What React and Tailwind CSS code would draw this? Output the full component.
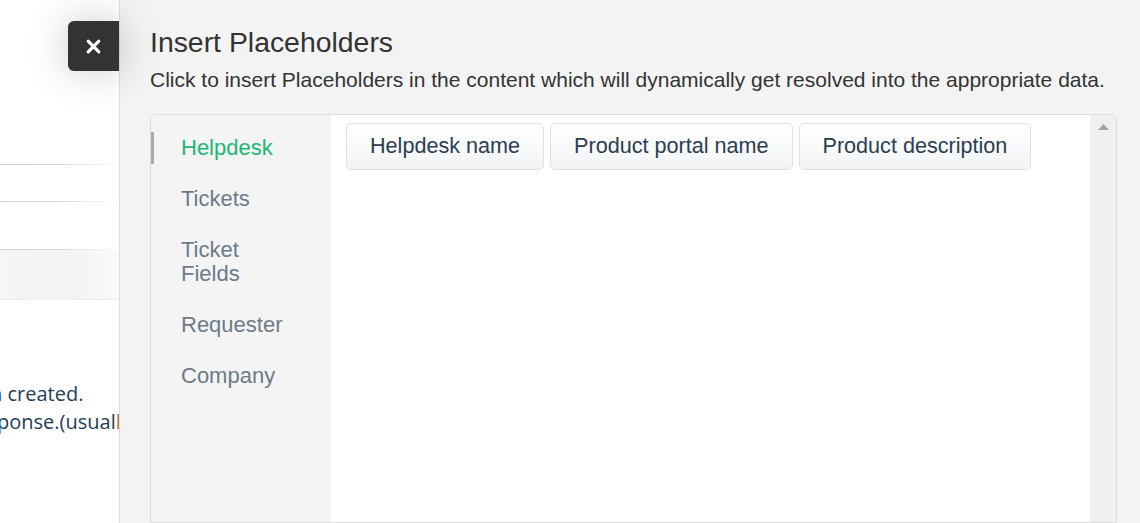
import React from "react";

const navItems = [
  { label: "Helpdesk", active: true },
  { label: "Tickets" },
  { label: "Ticket\nFields" },
  { label: "Requester" },
  { label: "Company" },
];

const placeholders = ["Helpdesk name", "Product portal name", "Product description"];

function Line({ className }) {
  return <div className={`h-px bg-gradient-to-r from-[#cfd3d6] via-[#d6d9db] to-white ${className}`} />;
}

export default function App() {
  return (
    <div className="relative flex w-[1140px] h-[523px] overflow-hidden bg-white font-['Liberation_Sans',Arial,sans-serif]">
      {/* page behind the drawer */}
      <div className="w-[119px] shrink-0 bg-white relative overflow-hidden">
        <Line className="mt-[164px]" />
        <Line className="mt-[36px]" />
        <Line className="mt-[47px]" />
        <div className="h-[50px] bg-gradient-to-r from-[#f6f6f6] via-[#f2f2f2] to-[#fafafa] border-b border-[#eeeeee]" />
        <div className="mt-[80px] whitespace-nowrap font-['Open_Sans',sans-serif] text-[20px] leading-[28px] text-[#223d57]">
          <div className="-ml-[10px]">n created.</div>
          <div className="-ml-[3px]">
            ponse.(usua<span>l</span>
            <span className="text-[#c0682a]">l</span>
          </div>
        </div>
      </div>

      {/* close button */}
      <button className="absolute left-[68px] top-[21px] w-[51px] h-[50px] rounded-l-md bg-[#333333] flex items-center justify-center shadow-[0_0_40px_rgba(0,0,0,0.22)] z-10">
        <svg width="17" height="17" viewBox="0 0 16 16">
          <path d="M3 3L13 13M13 3L3 13" stroke="white" strokeWidth="3" strokeLinecap="round" />
        </svg>
      </button>

      {/* drawer */}
      <div className="flex-1 bg-[#f3f3f3] border-l border-[#dddddd] pl-[30px] pr-[23px] flex flex-col">
        <h1 className="mt-[26px] text-[28.4px] leading-[32px] text-[#333333]">Insert Placeholders</h1>
        <p className="mt-[8px] text-[21px] leading-[28px] text-[#333333] whitespace-nowrap">
          Click to insert Placeholders in the content which will dynamically get resolved into the appropriate data.
        </p>
        <div className="mt-[20px] flex-1 flex border border-[#dddddd] rounded-t-md overflow-hidden">
          <nav className="w-[180px] shrink-0 bg-[#f4f4f4] pt-[17px] flex flex-col gap-[19px]">
            {navItems.map((it) => (
              <div
                key={it.label}
                className={`pl-[27px] py-1 text-[22px] leading-6 whitespace-pre-line border-l-[3px] ${
                  it.active ? "border-[#aaaaaa] text-[#1bb877]" : "border-transparent text-[#6d7b89]"
                }`}
              >
                {it.label}
              </div>
            ))}
          </nav>
          <div className="flex-1 bg-white pt-[8px] pl-[15px] flex items-start gap-[6px]">
            {placeholders.map((p) => (
              <button
                key={p}
                className="h-[47px] px-[23px] rounded-[5px] border border-[#dde1e5] bg-gradient-to-b from-white to-[#f2f4f6] text-[21.6px] text-[#2c3e50] whitespace-nowrap"
              >
                {p}
              </button>
            ))}
          </div>
          <div className="w-[26px] shrink-0 bg-[#f0f0f0] flex justify-center pt-[9px]">
            <svg width="11" height="6" viewBox="0 0 11 6">
              <path d="M5.5 0L11 6H0Z" fill="#a3a3a3" />
            </svg>
          </div>
        </div>
      </div>
    </div>
  );
}
